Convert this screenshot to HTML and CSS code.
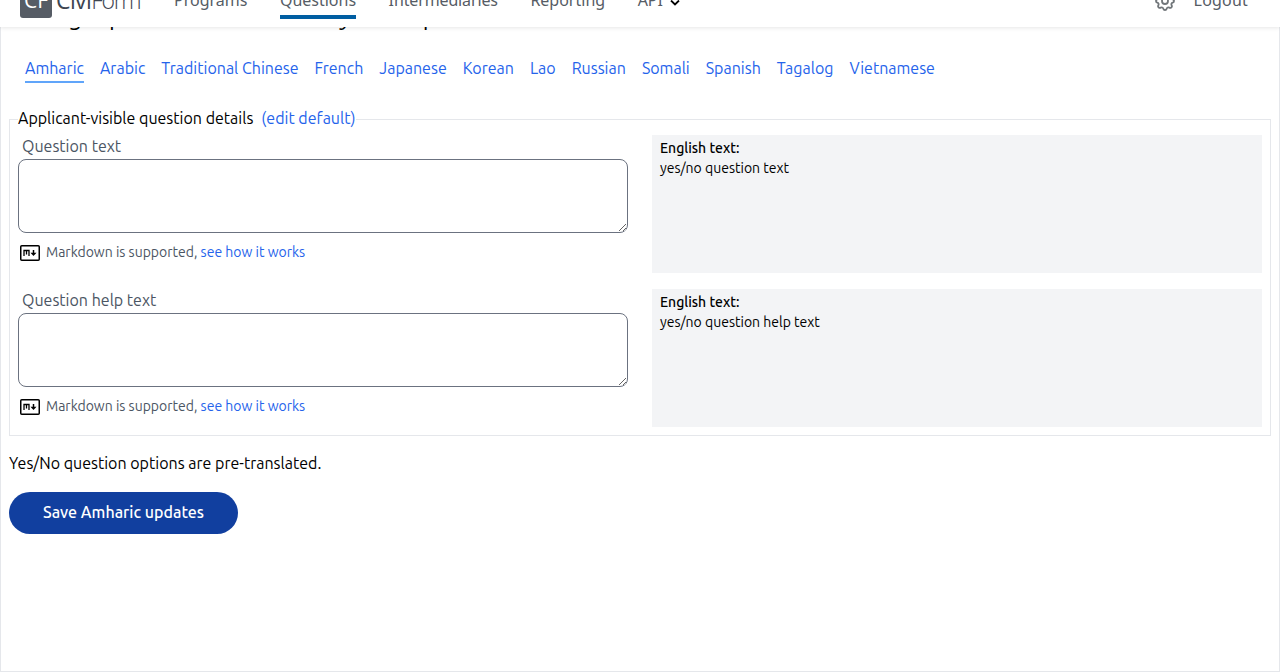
FILE: index.html
```
<!DOCTYPE html>
<html lang="en">
<head>
<meta charset="utf-8">
<title>Manage question translations</title>
<link rel="stylesheet" href="styles.css">
</head>
<body>
<header class="topbar">
  <div class="logo"><span class="logo-mark">CF</span><span class="logo-name"><b>Civi</b>Form</span></div>
  <nav class="nav">
    <a class="nav-link">Programs</a>
    <a class="nav-link nav-current">Questions</a>
    <a class="nav-link nav-long">Intermediaries</a>
    <a class="nav-link">Reporting</a>
    <a class="nav-link nav-api">API <svg width="10" height="6" viewBox="0 0 10 6"><path d="M1 0.5 5 4.5 9 0.5" fill="none" stroke="#000" stroke-width="1.8"/></svg></a>
  </nav>
  <div class="account">
    <svg class="gear" width="24" height="24" viewBox="0 0 24 24" fill="none" stroke="#71767a" stroke-width="1.8"><path d="M10.325 4.317c.426-1.756 2.924-1.756 3.35 0a1.724 1.724 0 002.573 1.066c1.543-.94 3.31.826 2.37 2.37a1.724 1.724 0 001.065 2.572c1.756.426 1.756 2.924 0 3.35a1.724 1.724 0 00-1.066 2.573c.94 1.543-.826 3.31-2.37 2.37a1.724 1.724 0 00-2.572 1.065c-.426 1.756-2.924 1.756-3.35 0a1.724 1.724 0 00-2.573-1.066c-1.543.94-3.31-.826-2.37-2.37a1.724 1.724 0 00-1.065-2.572c-1.756-.426-1.756-2.924 0-3.35a1.724 1.724 0 001.066-2.573c-.94-1.543.826-3.31 2.37-2.37.996.608 2.296.07 2.572-1.065z"/><circle cx="12" cy="12" r="3"/></svg>
    <a class="nav-link nav-logout">Logout</a>
  </div>
</header>
<main class="page">
  <h1 class="title">Manage question translations: yes-no question</h1>
  <div class="tabs">
    <a class="tab tab-current">Amharic</a><a class="tab">Arabic</a><a class="tab">Traditional Chinese</a><a class="tab">French</a><a class="tab">Japanese</a><a class="tab">Korean</a><a class="tab">Lao</a><a class="tab">Russian</a><a class="tab">Somali</a><a class="tab">Spanish</a><a class="tab">Tagalog</a><a class="tab">Vietnamese</a>
  </div>
  <fieldset class="details">
    <legend class="legend">Applicant-visible question details<a class="link edit">(edit default)</a></legend>
    <div class="row">
      <div class="field">
        <label class="label">Question text</label>
        <textarea class="input"></textarea>
        <div class="hint"><svg width="20" height="16" viewBox="0 0 20 16"><rect x=".75" y=".75" width="18.5" height="14.5" rx="1" fill="none" stroke="#000" stroke-width="1.5"/><path d="M4 11V5.5h5V11M6.5 6v3.5" fill="none" stroke="#000" stroke-width="1.3"/><path d="M13.5 5v4" stroke="#000" stroke-width="1.5"/><path d="M10.5 7.7h6L13.5 11z"/></svg><span>Markdown is supported, <a class="link">see how it works</a></span></div>
      </div>
      <div class="source"><b>English text:</b><p>yes/no question text</p></div>
    </div>
    <div class="row">
      <div class="field">
        <label class="label">Question help text</label>
        <textarea class="input"></textarea>
        <div class="hint"><svg width="20" height="16" viewBox="0 0 20 16"><rect x=".75" y=".75" width="18.5" height="14.5" rx="1" fill="none" stroke="#000" stroke-width="1.5"/><path d="M4 11V5.5h5V11M6.5 6v3.5" fill="none" stroke="#000" stroke-width="1.3"/><path d="M13.5 5v4" stroke="#000" stroke-width="1.5"/><path d="M10.5 7.7h6L13.5 11z"/></svg><span>Markdown is supported, <a class="link">see how it works</a></span></div>
      </div>
      <div class="source"><b>English text:</b><p>yes/no question help text</p></div>
    </div>
  </fieldset>
  <p class="note">Yes/No question options are pre-translated.</p>
  <button class="save">Save Amharic updates</button>
</main>
</body>
</html>
```
FILE: styles.css
```
* { box-sizing: border-box; }
body {
  margin: 0; height: 672px; overflow: hidden; background: #fff; color: #000;
  font-family: Ubuntu, "Noto Sans", "Open Sans", sans-serif; font-size: 16px; line-height: 24px;
}
p, h1 { margin: 0; }
.topbar {
  position: relative; z-index: 1; height: 57px; margin-top: -30px; padding: 0 32px 0 20px;
  display: flex; align-items: flex-start; background: #fff;
  box-shadow: 0 1px 4px rgba(0,0,0,.1); color: #565c65;
  font-family: "Noto Sans", sans-serif; font-size: 16px;
}
.logo { display: flex; gap: 4px; width: 154px; padding-top: 16px; }
.logo-mark { width: 32px; height: 32px; border-radius: 3px; background: #565c65; color: #fff; font-family: "Open Sans", sans-serif; font-size: 21px; line-height: 29px; text-align: center; }
.logo-name { font-family: "Open Sans", sans-serif; font-size: 23px; line-height: 28px; font-weight: 300; color: #3d4551; letter-spacing: -1.3px; }
.logo-name b { font-weight: 500; letter-spacing: -.6px; }
.nav { display: flex; gap: 32.5px; flex: 1; }
.nav-link { padding-top: 18px; height: 49px; color: #565c65; white-space: nowrap; }
.nav-current { border-bottom: 4px solid #005ea2; }
.nav-long { letter-spacing: -.13px; }
.nav-api svg { margin-left: 3px; }
.nav-logout { letter-spacing: .2px; }
.account { display: flex; }
.gear { margin: 19px 17px 0 0; }
.page { height: 671px; padding: 0 8px; border: 1px solid #e5e7eb; border-top: 0; }
.title { font-size: 24px; font-weight: 400; line-height: 32px; margin-top: -26px; white-space: nowrap; }
.tabs { display: flex; gap: 16px; padding: 23px 16px 0; }
.tab { color: #2563eb; height: 27px; white-space: nowrap; }
.tab-current { border-bottom: 2px solid #60a5fa; }
.link { color: #2563eb; }
.details { margin: 23px 0 0; padding: 3px 8px 8px; border: 1px solid #e5e7eb; display: block; }
.legend { padding: 0 0 2px; }
.edit { margin-left: 8px; }
.row { display: grid; grid-template-columns: 1fr 1fr; gap: 24px; height: 138px; }
.row + .row { margin-top: 16px; }
.label { display: block; color: #4b5563; padding-left: 4px; height: 24px; line-height: 22px; }
.input { display: block; width: 100%; height: 74px; border: 1px solid #6b7280; border-radius: 8px; background: #fff; }
.hint { display: flex; gap: 6px; padding-left: 2px; margin-top: 9px; font-size: 14px; line-height: 20px; color: #4b5563; }
.hint svg { margin-top: 3px; }
.source { background: #f3f4f6; padding: 3px 8px; font-size: 14px; line-height: 20px; }
.source b { font-weight: 500; }
.note { margin-top: 15px; }
.save { display: block; margin-top: 17px; width: 229px; height: 42px; border: 0; border-radius: 21px; background: #113f9f; color: #fff; font: 550 16px/40px Ubuntu, "Noto Sans", sans-serif; padding: 0 0 2px; }
```
